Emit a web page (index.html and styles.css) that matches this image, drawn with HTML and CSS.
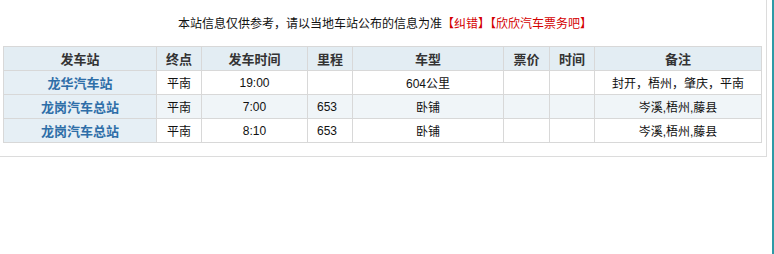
FILE: index.html
```html
<!DOCTYPE html>
<html lang="zh-CN">
<head>
<meta charset="utf-8">
<title>班次信息</title>
<link rel="stylesheet" href="styles.css">
</head>
<body>
<div class="page">
  <div class="frame">
    <p class="notice">本站信息仅供参考，请以当地车站公布的信息为准<a class="red" href="#">【纠错】</a><a class="red" href="#">【欣欣汽车票务吧】</a></p>
    <table class="sched">
      <colgroup>
        <col class="c1"><col class="c2"><col class="c3"><col class="c4"><col class="c5"><col class="c6"><col class="c7"><col class="c8">
      </colgroup>
      <thead>
        <tr><th>发车站</th><th>终点</th><th>发车时间</th><th>里程</th><th>车型</th><th>票价</th><th>时间</th><th>备注</th></tr>
      </thead>
      <tbody>
        <tr><td class="st"><a href="#">龙华汽车站</a></td><td>平南</td><td>19:00</td><td></td><td>604公里</td><td></td><td></td><td>封开，梧州，肇庆，平南</td></tr>
        <tr class="alt"><td class="st"><a href="#">龙岗汽车总站</a></td><td>平南</td><td>7:00</td><td class="l">653</td><td>卧铺</td><td></td><td></td><td>岑溪,梧州,藤县</td></tr>
        <tr><td class="st"><a href="#">龙岗汽车总站</a></td><td>平南</td><td>8:10</td><td class="l">653</td><td>卧铺</td><td></td><td></td><td>岑溪,梧州,藤县</td></tr>
      </tbody>
    </table>
  </div>
  <div class="gap"></div>
  <div class="edge"></div>
</div>
</body>
</html>
```

FILE: styles.css
```css
html, body {
  margin: 0;
  padding: 0;
  background: #fff;
}
body {
  font-family: "Liberation Sans", "Noto Sans CJK SC", sans-serif;
  font-size: 12px;
  color: #111;
}
.page {
  display: flex;
  width: 774px;
  height: 254px;
}
.frame {
  width: 766px;
  height: 156px;
  border-right: 1px solid #dcdcdc;
  border-bottom: 1px solid #dcdcdc;
  flex: none;
}
.gap {
  width: 5px;
  flex: none;
}
.edge {
  width: 2px;
  background: #2e9aa6;
  flex: none;
}
.notice {
  margin: 0;
  padding-top: 16px;
  padding-left: 4px;
  box-sizing: border-box;
  height: 46px;
  line-height: 17px;
  text-align: center;
}
.red {
  color: #d40000;
  text-decoration: none;
}
.sched {
  margin-left: 3px;
  width: 758px;
  border-collapse: collapse;
  table-layout: fixed;
}
.c1 { width: 153px; }
.c2 { width: 45px; }
.c3 { width: 106px; }
.c4 { width: 45px; }
.c5 { width: 151px; }
.c6 { width: 46px; }
.c7 { width: 45px; }
.c8 { width: 167px; }
.sched th, .sched td {
  border: 1px solid #d8d8d8;
  height: 23px;
  padding: 0;
  text-align: center;
  vertical-align: middle;
}
.sched th {
  background: #e3edf3;
  font-size: 13px;
  font-weight: bold;
  color: #333;
}
.sched td.st {
  background: #e6eff5;
}
.sched td.st a {
  color: #2e6ea8;
  font-weight: bold;
  font-size: 13px;
  text-decoration: none;
}
.sched tr.alt td {
  background: #f0f5f8;
}
.sched tr.alt td.st {
  background: #e6eff5;
}
.sched td.l {
  text-align: left;
  padding-left: 9px;
}
```
